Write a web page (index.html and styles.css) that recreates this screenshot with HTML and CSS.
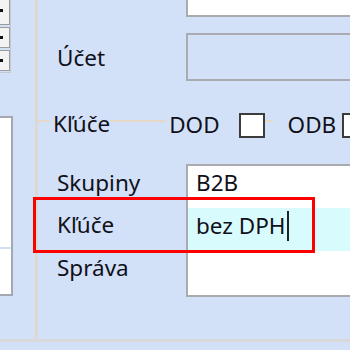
FILE: index.html
```html
<!DOCTYPE html>
<html lang="sk">
<head>
  <meta charset="UTF-8">
  <title>Zákazník</title>
  <link rel="stylesheet" href="styles.css">
</head>
<body>
  <div class="screen">
    <div class="main">
      <!-- ľavý stĺpec: tlačidlá a zoznam -->
      <div class="side">
        <div class="spin">
          <div class="spin-btn first"><span class="dot"></span></div>
          <div class="spin-btn"><span class="dot"></span></div>
          <div class="spin-btn"><span class="dot"></span></div>
        </div>
        <div class="side-list">
          <div class="side-row"></div>
          <div class="side-row"></div>
        </div>
      </div>
      <div class="vsep"></div>

      <!-- formulár -->
      <div class="form">
        <div class="field-row top-row">
          <div class="label"></div>
          <div class="textbox top-box"></div>
        </div>
        <div class="field-row ucet-row">
          <div class="label">Účet</div>
          <div class="textbox disabled"></div>
        </div>
        <div class="group-head">
          <span class="gline lead"></span>
          <span class="group-title">Kľúče</span>
          <span class="gline mid"></span>
          <span class="check-label">DOD</span>
          <span class="checkbox dod"></span>
          <span class="gline short"></span>
          <span class="check-label">ODB</span>
          <span class="checkbox odb"></span>
        </div>
        <div class="field-row list-row">
          <div class="labels">
            <div class="label item">Skupiny</div>
            <div class="label item mid-item">Kľúče</div>
            <div class="label item last-item">Správa</div>
          </div>
          <div class="listbox">
            <div class="item">B2B</div>
            <div class="item mid-item selected">bez DPH<span class="caret"></span></div>
            <div class="item last-item"></div>
          </div>
        </div>
      </div>
    </div>
    <div class="hsep"></div>

    <!-- zvýraznenie riadku -->
    <div class="highlight"></div>
  </div>
</body>
</html>
```

FILE: styles.css
```css
* { box-sizing: border-box; }
body {
  margin: 0;
  background: #d2e1f8;
  font-family: 'Noto Sans', 'Open Sans', sans-serif;
  font-size: 22.5px;
  color: #101018;
}
.screen {
  position: relative;
  width: 350px;
  height: 350px;
  overflow: hidden;
  background: #d2e1f8;
}
.main {
  display: flex;
  height: 339px;
}

/* ľavý stĺpec */
.side {
  width: 35px;
  flex: none;
}
.spin {
  width: 11px;
  display: flex;
  flex-direction: column;
  gap: 2px;
  border-right: 1px solid #c4c8d0;
  border-bottom: 1px solid #c4c8d0;
  padding-bottom: 1px;
}
.spin-btn {
  height: 21px;
  background: #f3f3f3;
  border: 1px solid #9c9c9c;
  border-left: none;
  display: flex;
  align-items: center;
}
.spin-btn.first {
  height: 25px;
  border-top: none;
  align-items: flex-start;
  padding-top: 9px;
}
.dot {
  width: 3px;
  height: 3px;
  background: #111;
}
.side-list {
  margin-top: 43px;
  width: 13px;
  height: 180px;
  background: #fff;
  border: 2px solid #a4a8b0;
  border-left: none;
}
.side-row {
  height: 131px;
  border-bottom: 2px solid #cfe0f6;
}
.side-row + .side-row {
  height: auto;
  border: none;
}
.vsep {
  width: 3px;
  flex: none;
  background: #dcd9d2;
}

/* formulár */
.form {
  flex: 1;
  min-width: 0;
}
.field-row {
  display: grid;
  grid-template-columns: 148px 1fr;
  align-items: center;
}
.label {
  padding-left: 19px;
  line-height: 28px;
}
.textbox {
  border: 2px solid #a9abb0;
  width: 200px;
}
.top-box {
  height: 17px;
  border-top: none;
  background: #fff;
}
.ucet-row {
  margin-top: 16px;
}
.disabled {
  height: 48px;
  background: transparent;
}
.ucet-row .label {
  padding-top: 1px;
}

/* skupina Kľúče */
.group-head {
  display: flex;
  align-items: center;
  height: 40px;
  margin-top: 24px;
  line-height: 28px;
  white-space: nowrap;
}
.gline {
  height: 2px;
  background: #e3d9c6;
  margin-bottom: 8px;
  flex: none;
}
.gline.lead { width: 12px; }
.gline.mid { width: 56px; }
.gline.short { width: 8px; margin-right: 12px; }
.group-title {
  margin-left: 3px;
  margin-bottom: 3px;
}
.check-label {
  margin-left: 3px;
}
.checkbox {
  width: 26px;
  height: 25px;
  margin-top: 1px;
  background: #fff;
  border: 2px solid #3c3c3c;
  flex: none;
}
.checkbox.dod { margin-left: 19px; }
.checkbox.odb { margin-left: 6px; }

/* zoznam */
.list-row {
  margin-top: 19px;
  align-items: start;
}
.labels {
  padding-top: 2px;
}
.item {
  height: 42px;
  padding-top: 3px;
  line-height: 28px;
}
.mid-item { height: 43px; }
.last-item { height: 44px; }
.listbox {
  width: 200px;
  background: #fff;
  border: 2px solid #a9abb0;
}
.listbox .item {
  padding-left: 8px;
}
.selected {
  background: #d8fbfd;
}
.caret {
  display: inline-block;
  width: 2px;
  height: 30px;
  margin-left: 2px;
  background: #222;
  vertical-align: -7px;
}

.hsep {
  height: 3px;
  background: #d9d9d9;
}
.highlight {
  position: absolute;
  left: 33px;
  top: 197px;
  width: 282px;
  height: 56px;
  border: 3px solid #ff0000;
}
```
